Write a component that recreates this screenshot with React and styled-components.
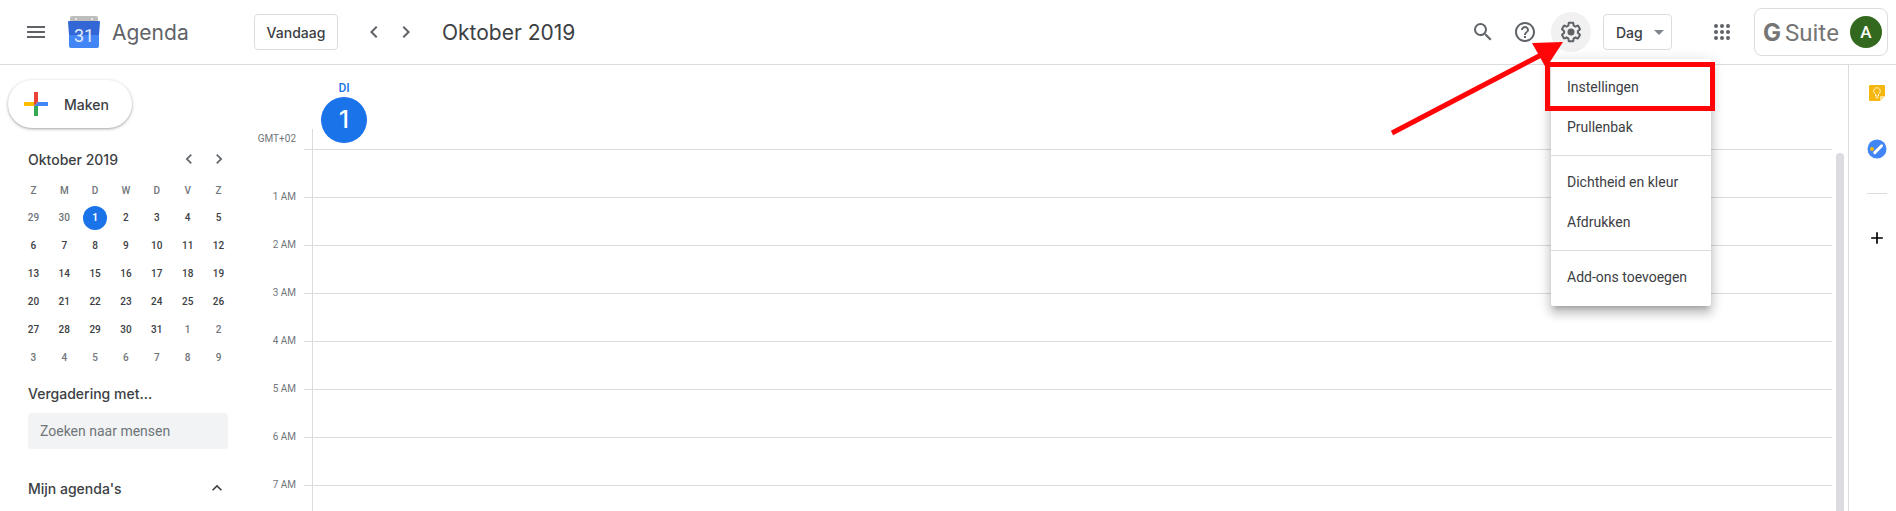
import React from 'react';
import styled, { createGlobalStyle, css } from 'styled-components';
import {
  MdMenu,
  MdChevronLeft,
  MdChevronRight,
  MdSearch,
  MdHelpOutline,
  MdArrowDropDown,
  MdExpandLess,
  MdAdd,
} from 'react-icons/md';

const GlobalStyle = createGlobalStyle`
  * {
    box-sizing: border-box;
  }
  body {
    margin: 0;
    background: #fff;
    color: #3c4043;
    font-family: Roboto, "Liberation Sans", sans-serif;
    font-size: 14px;
  }
  button, input {
    font-family: inherit;
    color: inherit;
  }
`;

const display = css`
  font-family: Inter, "Open Sans", sans-serif;
`;

const Page = styled.div`
  display: flex;
  flex-direction: column;
  height: 100vh;
  overflow: hidden;
`;

const Header = styled.header`
  display: flex;
  align-items: center;
  flex-shrink: 0;
  height: 65px;
  padding: 0 8px 0 16px;
  border-bottom: 1px solid #dadce0;
`;

const HeaderLeft = styled.div`
  display: flex;
  align-items: center;
  width: 238px;
`;

const HeaderRight = styled.div`
  display: flex;
  align-items: center;
  margin-left: auto;
`;

const IconButton = styled.button`
  display: flex;
  align-items: center;
  justify-content: center;
  flex-shrink: 0;
  width: ${(props) => props.$size || 40}px;
  height: ${(props) => props.$size || 40}px;
  padding: 0;
  border: 0;
  border-radius: 50%;
  background: ${(props) => (props.$active ? '#f1f1f1' : 'transparent')};
  color: ${(props) => props.$color || '#5f6368'};
  cursor: pointer;
`;

const Brand = styled.a`
  display: flex;
  align-items: center;
  gap: 12px;
  margin-left: 12px;
  color: #5f6368;
  font-size: 21px;
  text-decoration: none;
  ${display}
`;

const OutlineButton = styled.button`
  display: flex;
  align-items: center;
  justify-content: center;
  width: ${(props) => props.$width}px;
  height: 36px;
  padding: 0;
  border: 1px solid #dadce0;
  border-radius: 4px;
  background: #fff;
  font-size: 14px;
  font-weight: 500;
  cursor: pointer;
  ${display}
`;

const ViewButton = styled(OutlineButton)`
  justify-content: space-between;
  padding-left: 12px;
`;

const Pager = styled.div`
  display: flex;
  margin-left: 20px;
`;

const Title = styled.h1`
  margin: 0 0 0 20px;
  font-size: 21px;
  font-weight: 400;
  ${display}
`;

const Tools = styled.div`
  display: flex;
  align-items: center;
  gap: ${(props) => props.$gap}px;
  margin-right: ${(props) => props.$after || 0}px;
`;

const Account = styled.div`
  display: flex;
  align-items: center;
  justify-content: space-between;
  width: 134px;
  height: 48px;
  padding: 0 5px 0 8px;
  border: 1px solid #dadce0;
  border-radius: 8px;
`;

const Suite = styled.span`
  color: #757575;
  font-size: 24px;
  b {
    margin-right: 4px;
    font-weight: 700;
    ${display}
  }
`;

const Avatar = styled.button`
  width: 32px;
  height: 32px;
  padding: 0;
  border: 0;
  border-radius: 50%;
  background: #33691e;
  color: #fff;
  font-size: 17px;
  font-weight: 500;
  cursor: pointer;
`;

const Body = styled.div`
  display: flex;
  flex: 1;
  min-height: 0;
`;

const Sidebar = styled.aside`
  flex-shrink: 0;
  width: 256px;
  padding: 15px 0 0 8px;
`;

const CreateButton = styled.button`
  display: flex;
  align-items: center;
  gap: 16px;
  width: 124px;
  height: 48px;
  padding: 0 0 0 16px;
  border: 0;
  border-radius: 24px;
  background: #fff;
  box-shadow: 0 1px 2px 0 rgba(60, 64, 67, 0.3), 0 1px 3px 1px rgba(60, 64, 67, 0.15);
  font-size: 14px;
  font-weight: 500;
  cursor: pointer;
  ${display}
`;

const SectionHead = styled.div`
  display: flex;
  align-items: center;
  justify-content: space-between;
  height: 30px;
  margin-top: ${(props) => props.$top}px;
  padding: 0 ${(props) => props.$end || 22}px 0 20px;
`;

const SectionTitle = styled.h2`
  margin: 0;
  font-size: 14px;
  font-weight: 500;
  ${display}
`;

const MiniPager = styled.div`
  display: flex;
`;

const MiniMonth = styled.table`
  width: 216px;
  margin: 2px 0 0 10px;
  border-collapse: collapse;
  table-layout: fixed;
  font-size: 10px;
  th, td {
    height: 28px;
    padding: 0;
    text-align: center;
    font-weight: 500;
  }
  th {
    color: #70757a;
  }
`;

const Day = styled.span`
  display: inline-block;
  width: 24px;
  height: 24px;
  border-radius: 50%;
  line-height: 24px;
  vertical-align: middle;
  color: ${(props) => (props.$today ? '#fff' : props.$muted ? '#70757a' : '#3c4043')};
  background: ${(props) => (props.$today ? '#1a73e8' : 'transparent')};
  font-weight: ${(props) => (props.$today ? 700 : 500)};
`;

const PeopleSearch = styled.input`
  display: block;
  width: 200px;
  height: 36px;
  margin: 5px 0 0 20px;
  padding: 0 12px;
  border: 0;
  border-radius: 4px;
  background: #f1f3f4;
  font-size: 14px;
  &::placeholder {
    color: #70757a;
    opacity: 1;
  }
`;

const Calendar = styled.main`
  flex: 1;
  min-width: 0;
  margin-right: 16px;
  overflow: hidden;
`;

const DayHeader = styled.div`
  display: grid;
  grid-template-columns: 40px 17px 1fr;
  align-items: end;
  height: 84px;
`;

const Zone = styled.span`
  padding-bottom: 4px;
  color: #70757a;
  font-size: 10px;
  line-height: 12px;
  text-align: right;
`;

const Tick = styled.span`
  height: 20px;
  border-right: 1px solid #dadce0;
`;

const DayHeading = styled.div`
  display: flex;
  flex-direction: column;
  align-items: center;
  gap: 2px;
  width: 46px;
  margin: 0 0 6px 8px;
  color: #1a73e8;
  font-size: 12px;
  font-weight: 500;
  line-height: 14px;
`;

const DayNumber = styled.span`
  width: 46px;
  height: 46px;
  border-radius: 50%;
  background: #1a73e8;
  color: #fff;
  font-size: 24px;
  line-height: 46px;
  text-align: center;
  ${display}
`;

const HourRow = styled.div`
  display: grid;
  grid-template-columns: 40px 8px 9px 1fr;
  height: 48px;
`;

const HourLabel = styled.span`
  align-self: end;
  margin-bottom: -6px;
  color: #70757a;
  font-size: 10px;
  line-height: 12px;
  text-align: right;
`;

const HourStub = styled.span`
  grid-column: 3;
  border-right: 1px solid #dadce0;
  border-top: 1px solid #dadce0;
`;

const HourCell = styled.span`
  border-top: 1px solid #dadce0;
`;

const Scrollbar = styled.div`
  flex-shrink: 0;
  width: 8px;
  margin: 88px 4px 0 -12px;
  border-radius: 4px 4px 0 0;
  background: #dadce0;
`;

const Rail = styled.nav`
  display: flex;
  flex-direction: column;
  align-items: center;
  flex-shrink: 0;
  width: 48px;
  padding: 12px 0 0 8px;
  border-left: 1px solid #dadce0;
`;

const RailButton = styled(IconButton)`
  margin-bottom: ${(props) => props.$gap || 0}px;
`;

const RailLine = styled.hr`
  width: 20px;
  height: 1px;
  margin: 0 0 28px;
  border: 0;
  background: #dadce0;
`;

const SettingsAnchor = styled.div`
  position: relative;
`;

const Menu = styled.div`
  position: absolute;
  z-index: 2;
  top: 47px;
  left: 0;
  width: 160px;
  padding: 8px 0 9px;
  border-radius: 2px;
  background: #fff;
  box-shadow: 0 8px 10px 1px rgba(0, 0, 0, 0.14), 0 3px 14px 2px rgba(0, 0, 0, 0.12),
    0 5px 5px -3px rgba(0, 0, 0, 0.2);
  hr {
    height: 1px;
    margin: 8px 0 6px;
    border: 0;
    background: #dadce0;
  }
`;

const MenuItem = styled.button`
  display: block;
  width: 100%;
  height: 40px;
  padding: 0 16px;
  border: 0;
  background: none;
  font-size: 14px;
  text-align: left;
  white-space: nowrap;
  cursor: pointer;
`;

const Highlight = styled.div`
  position: absolute;
  z-index: 3;
  top: 50px;
  left: -6px;
  width: 170px;
  height: 49px;
  border: 5px solid #ff0508;
  pointer-events: none;
`;

const Pointer = styled.svg`
  position: absolute;
  z-index: 4;
  top: 28px;
  left: -164px;
  pointer-events: none;
`;

const weekdays = ['Z', 'M', 'D', 'W', 'D', 'V', 'Z'];

const weeks = [
  [29, 30, 1, 2, 3, 4, 5],
  [6, 7, 8, 9, 10, 11, 12],
  [13, 14, 15, 16, 17, 18, 19],
  [20, 21, 22, 23, 24, 25, 26],
  [27, 28, 29, 30, 31, 1, 2],
  [3, 4, 5, 6, 7, 8, 9],
];

const hours = ['1 AM', '2 AM', '3 AM', '4 AM', '5 AM', '6 AM', '7 AM', ''];

const isOutside = (week, day) => (week === 0 && day > 20) || (week > 3 && day < 20);

function CalendarLogo() {
  return (
    <svg width="32" height="32" viewBox="0 0 32 32" aria-hidden="true">
      <path d="M4 0h24a2 2 0 0 1 2 2v4H2V2a2 2 0 0 1 2-2z" fill="#bdbdbd" />
      <circle cx="8" cy="3" r="1" fill="#f5f5f5" />
      <circle cx="24" cy="3" r="1" fill="#f5f5f5" />
      <path d="M1 18h30v12a2 2 0 0 1-2 2H3a2 2 0 0 1-2-2z" fill="#4285f4" />
      <path d="M1 5h30q1 0 1 1l-1 13H1L0 6q0-1 1-1z" fill="#3367d6" />
      <text x="16" y="26" fill="#e3ebfa" fontFamily="Roboto" fontSize="18" textAnchor="middle">31</text>
    </svg>
  );
}

function GearIcon() {
  return (
    <svg width="24" height="24" viewBox="0 0 24 24" fill="currentColor" aria-hidden="true">
      <path d="M13.85 22.25h-3.7c-.74 0-1.36-.54-1.45-1.27l-.27-1.89c-.27-.14-.53-.29-.79-.46l-1.8.72c-.7.26-1.47-.03-1.81-.65L2.2 15.53c-.35-.66-.2-1.44.36-1.88l1.53-1.19c-.01-.15-.02-.3-.02-.46 0-.15.01-.31.02-.46l-1.52-1.19c-.59-.45-.74-1.26-.37-1.88l1.85-3.19c.34-.62 1.11-.9 1.79-.63l1.81.73c.26-.17.52-.32.78-.46l.27-1.91c.09-.7.71-1.25 1.44-1.25h3.7c.74 0 1.36.54 1.45 1.27l.27 1.89c.27.14.53.29.79.46l1.8-.72c.71-.26 1.48.03 1.82.65l1.84 3.18c.36.66.2 1.44-.36 1.88l-1.52 1.19c.01.15.02.3.02.46s-.01.31-.02.46l1.52 1.19c.56.45.72 1.23.37 1.86l-1.86 3.22c-.34.62-1.11.9-1.8.63l-1.8-.72c-.26.17-.52.32-.78.46l-.27 1.91c-.1.68-.72 1.22-1.46 1.22zm-3.23-2h2.76l.37-2.55.53-.22c.44-.18.88-.44 1.34-.78l.45-.34 2.38.96 1.38-2.4-2.03-1.58.07-.56c.03-.26.06-.51.06-.78s-.03-.53-.06-.78l-.07-.56 2.03-1.58-1.39-2.4-2.39.96-.45-.35c-.42-.32-.87-.58-1.33-.77l-.52-.22-.37-2.55h-2.76l-.37 2.55-.53.21c-.44.19-.88.44-1.34.79l-.45.33-2.38-.95-1.39 2.39 2.03 1.58-.07.56a7 7 0 0 0-.06.79c0 .26.02.53.06.78l.07.56-2.03 1.58 1.38 2.4 2.39-.96.45.35c.43.33.86.58 1.33.77l.53.22.38 2.55z" />
      <circle cx="12" cy="12" r="3.5" />
    </svg>
  );
}

function AppsIcon() {
  return (
    <svg width="24" height="24" viewBox="0 0 24 24" fill="currentColor" aria-hidden="true">
      {[6, 12, 18].map((cy) => [6, 12, 18].map((cx) => <circle key={`${cx}-${cy}`} cx={cx} cy={cy} r="2" />))}
    </svg>
  );
}

function PlusMark() {
  return (
    <svg width="24" height="24" viewBox="0 0 24 24" aria-hidden="true">
      <path d="M0 10h14l-4 4H0z" fill="#fbbc04" />
      <path d="M10 0h4v10l-4 4z" fill="#ea4335" />
      <path d="M10 14h4v10h-4z" fill="#34a853" />
      <path d="M14 10h10v4H10z" fill="#4285f4" />
    </svg>
  );
}

function KeepIcon() {
  return (
    <svg width="16" height="16" viewBox="0 0 16 16" aria-hidden="true">
      <path d="M1 0h14a1 1 0 0 1 1 1v10l-5 5H1a1 1 0 0 1-1-1V1a1 1 0 0 1 1-1z" fill="#f5b60d" />
      <path d="M11 16v-4a1 1 0 0 1 1-1h4z" fill="#fde293" />
      <path d="M6.5 11V9a3.300 3.300 0 1 1 3 0v2zM6.500 12.800h3" fill="none" stroke="#fff3cf" />
    </svg>
  );
}

function TasksIcon() {
  return (
    <svg width="20" height="20" viewBox="0 0 20 20" aria-hidden="true">
      <circle cx="10" cy="10" r="9.5" fill="#4285f4" />
      <path d="M7.8 13.6L14.6 6.8" stroke="#fff" strokeWidth="3" strokeLinecap="round" />
      <circle cx="5" cy="10" r="2" fill="#fbbc04" />
    </svg>
  );
}

function SettingsMenu() {
  return (
    <SettingsAnchor>
      <IconButton $active aria-label="Instellingenmenu">
        <GearIcon />
      </IconButton>
      <Menu role="menu">
        <MenuItem role="menuitem">Instellingen</MenuItem>
        <MenuItem role="menuitem">Prullenbak</MenuItem>
        <hr />
        <MenuItem role="menuitem">Dichtheid en kleur</MenuItem>
        <MenuItem role="menuitem">Afdrukken</MenuItem>
        <hr />
        <MenuItem role="menuitem">Add-ons toevoegen</MenuItem>
      </Menu>
      <Highlight />
      <Pointer width="180" height="100" viewBox="0 0 180 100" aria-hidden="true">
        <path d="M5 93L156 14" stroke="#ff0508" strokeWidth="5" />
        <path d="M176 2L145 3L159 28z" fill="#ff0508" />
      </Pointer>
    </SettingsAnchor>
  );
}

function TopBar() {
  return (
    <Header>
      <HeaderLeft>
        <IconButton aria-label="Hoofdmenu">
          <MdMenu size={24} />
        </IconButton>
        <Brand href="#">
          <CalendarLogo />
          Agenda
        </Brand>
      </HeaderLeft>
      <OutlineButton $width={84}>Vandaag</OutlineButton>
      <Pager>
        <IconButton $size={32} aria-label="Vorige dag">
          <MdChevronLeft size={24} />
        </IconButton>
        <IconButton $size={32} aria-label="Volgende dag">
          <MdChevronRight size={24} />
        </IconButton>
      </Pager>
      <Title>Oktober 2019</Title>
      <HeaderRight>
        <Tools $gap={2} $after={6}>
          <IconButton aria-label="Zoeken">
            <MdSearch size={24} />
          </IconButton>
          <IconButton aria-label="Help">
            <MdHelpOutline size={24} />
          </IconButton>
        </Tools>
        <Tools $gap={12} $after={30}>
          <SettingsMenu />
          <ViewButton $width={69}>
            Dag
            <MdArrowDropDown size={24} color="#80868b" />
          </ViewButton>
        </Tools>
        <Tools $gap={12}>
          <IconButton aria-label="Google-apps">
            <AppsIcon />
          </IconButton>
          <Account>
            <Suite>
              <b>G</b>Suite
            </Suite>
            <Avatar aria-label="Account">A</Avatar>
          </Account>
        </Tools>
      </HeaderRight>
    </Header>
  );
}

function MonthTable() {
  return (
    <MiniMonth>
      <thead>
        <tr>
          {weekdays.map((name, i) => (
            <th key={i}>{name}</th>
          ))}
        </tr>
      </thead>
      <tbody>
        {weeks.map((week, w) => (
          <tr key={w}>
            {week.map((day) => (
              <td key={day}>
                <Day $today={w === 0 && day === 1} $muted={isOutside(w, day)}>
                  {day}
                </Day>
              </td>
            ))}
          </tr>
        ))}
      </tbody>
    </MiniMonth>
  );
}

function App() {
  return (
    <>
      <GlobalStyle />
      <Page>
        <TopBar />
        <Body>
          <Sidebar>
            <CreateButton>
              <PlusMark />
              Maken
            </CreateButton>
            <SectionHead $top={16}>
              <SectionTitle>Oktober 2019</SectionTitle>
              <MiniPager>
                <IconButton $size={30} aria-label="Vorige maand">
                  <MdChevronLeft size={20} />
                </IconButton>
                <IconButton $size={30} aria-label="Volgende maand">
                  <MdChevronRight size={20} />
                </IconButton>
              </MiniPager>
            </SectionHead>
            <MonthTable />
            <SectionHead $top={6}>
              <SectionTitle as="label" htmlFor="people">
                Vergadering met...
              </SectionTitle>
            </SectionHead>
            <PeopleSearch id="people" placeholder="Zoeken naar mensen" />
            <SectionHead $top={24} $end={24}>
              <SectionTitle>Mijn agenda's</SectionTitle>
              <IconButton $size={30} $color="#3c4043" aria-label="Mijn agenda's samenvouwen">
                <MdExpandLess size={20} />
              </IconButton>
            </SectionHead>
          </Sidebar>
          <Calendar>
            <DayHeader>
              <Zone>GMT+02</Zone>
              <Tick />
              <DayHeading>
                DI
                <DayNumber>1</DayNumber>
              </DayHeading>
            </DayHeader>
            {hours.map((hour) => (
              <HourRow key={hour}>
                {hour && <HourLabel>{hour}</HourLabel>}
                <HourStub />
                <HourCell />
              </HourRow>
            ))}
          </Calendar>
          <Scrollbar />
          <Rail>
            <RailButton $size={32} $gap={24} aria-label="Keep">
              <KeepIcon />
            </RailButton>
            <RailButton $size={32} $gap={28} aria-label="Taken">
              <TasksIcon />
            </RailButton>
            <RailLine />
            <RailButton $size={32} $color="#000" aria-label="Add-ons downloaden">
              <MdAdd size={20} />
            </RailButton>
          </Rail>
        </Body>
      </Page>
    </>
  );
}

export default App;
